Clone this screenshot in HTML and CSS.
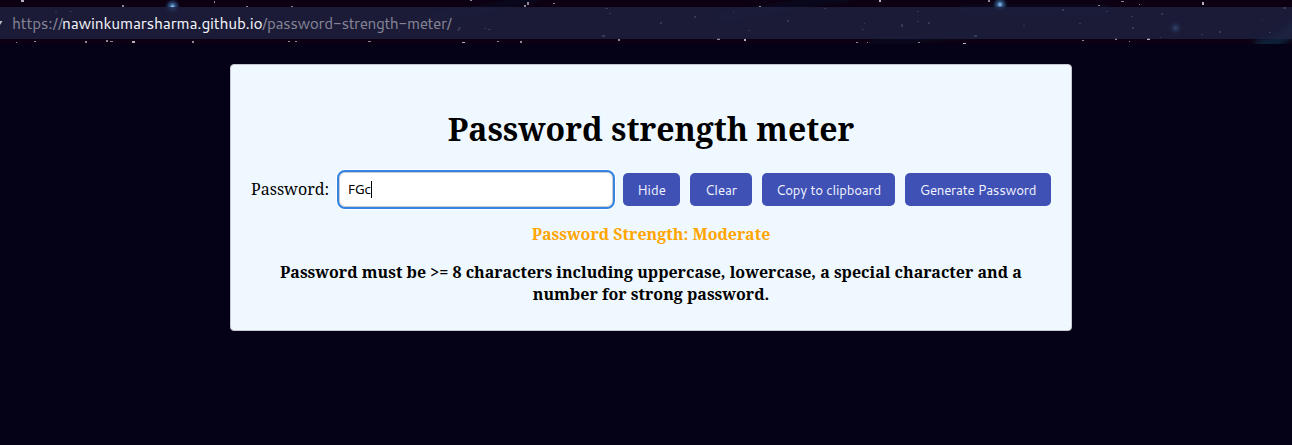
FILE: index.html
```html
<!DOCTYPE html>
<html lang="en">
<head>
<meta charset="utf-8">
<title>Password strength meter</title>
<link rel="stylesheet" href="styles.css">
</head>
<body>
<header class="toolbar">
  <svg class="sky" width="1292" height="44" viewBox="0 0 1292 44" aria-hidden="true">
    <defs>
      <filter id="soft" x="-50%" y="-150%" width="200%" height="400%"><feGaussianBlur stdDeviation="3"/></filter>
      <filter id="star" x="-5%" y="-20%" width="110%" height="140%"><feGaussianBlur stdDeviation=".6"/></filter>
      <radialGradient id="glow"><stop offset="0" stop-color="#a5d2fb"/><stop offset=".3" stop-color="#447db5" stop-opacity=".8"/><stop offset="1" stop-color="#153660" stop-opacity="0"/></radialGradient>
    </defs>
    <g filter="url(#soft)" fill="none" stroke="#0b1b30" stroke-width="4" opacity=".7">
      <path d="M718 18Q780 5 850 -2"/><path d="M420 20Q490 8 540 -3"/><path d="M870 44Q925 37 975 35"/><path d="M960 9H1110"/><path d="M1255 46Q1285 43 1300 20" stroke="#073048" stroke-width="12"/>
    </g>
    <circle cx="172.500" cy="6.500" r="8" fill="url(#glow)"/><circle cx="1000" cy="4.500" r="8" fill="url(#glow)"/><circle cx="1175.500" cy="28" r="7" fill="url(#glow)"/>
    <g fill="#8d8995" filter="url(#star)">
      <path d="M122 5h2v2h-2zM214 1h1v2h-1zM55 12h2v1h-2zM70 11h2v1h-2zM106 40h2v2h-2zM110 41h3v1h-3zM85 41h2v2h-2zM34 41h2v1h-2zM16 42h1v1h-1zM192 41h2v2h-2zM246 6h2v1h-2zM291 6h2v1h-2zM288 41h2v1h-2zM295 41h2v1h-2z"/>
      <path d="M368 41h3v1h-3zM470 0h2v1h-2zM524 5h2v2h-2zM527 2h2v3h-2zM553 3h2v1h-2zM497 41h2v1h-2zM520 41h2v2h-2zM618 39h2v2h-2zM605 8h3v1h-3zM609 13h2v1h-2zM602 35h3v2h-3zM459 27h2l-2 4h-2zM484 28h2v1h-2zM488 29h3v1h-3zM399 31h1v1h-1z"/>
      <path d="M759 6h2v1h-2zM733 11h1v1h-1zM694 16h2v2h-2zM660 22h2v2h-2zM787 20h2v2h-2zM748 30h2v1h-2zM717 38h3v2h-3zM824 8h2v1h-2zM862 29h2v1h-2zM864 23h1v1h-1zM917 11h2v1h-2zM917 21h2v1h-2zM901 24h2v3h-2zM928 22h2v2h-2zM856 42h2v1h-2zM867 42h1v1h-1zM918 42h2v1h-2z"/>
      <path d="M988 0h2v2h-2zM1121 1h3v1h-3zM1139 4h1v1h-1zM1062 9h2v2h-2zM1098 5h2v1h-2zM1106 11h2v1h-2zM1131 16h2v1h-2zM1161 13h2v2h-2zM1132 27h2v2h-2zM1219 31h2v2h-2zM1201 34h2v1h-2zM1115 38h2v2h-2zM1082 40h2v1h-2zM1129 41h1v1h-1zM1160 37h1v1h-1zM1262 19h1v1h-1zM1269 32h2v1h-2zM1079 23h2v1h-2zM1023 25h2v1h-2zM974 35h3v2h-3zM1283 7h3v2h-3z"/>
    </g>
    <path fill="#b5b0bd" filter="url(#star)" d="M21 0h3v2h-3zM132 41h3v2h-3zM462 42h3v1h-3zM744 39h2v2h-2zM879 0h2v2h-2zM963 43h3v1h-3zM1147 38h3v2h-3zM1202 2h2v3h-2z"/>
  </svg>
  <div class="address">
    <svg class="tick" width="3" height="5" aria-hidden="true"><path d="M0 0H2.500L0 4Z" fill="#bdbbc8"/></svg>
    <span class="muted scheme">https://</span><span class="domain">nawinkumarsharma.github.io</span><span class="muted path">/password-strength-meter/</span>
  </div>
</header>
<main class="card">
  <h1 class="title">Password strength meter</h1>
  <div class="controls">
    <label class="label" for="password">Password:</label>
    <div class="field" id="password" role="textbox"><span class="value">FGc</span><span class="caret"></span></div>
    <div class="actions">
      <button class="button hide">Hide</button>
      <button class="button clear">Clear</button>
      <button class="button copy">Copy to clipboard</button>
      <button class="button generate">Generate Password</button>
    </div>
  </div>
  <p class="strength">Password Strength: Moderate</p>
  <p class="hint">Password must be &gt;= 8 characters including uppercase, lowercase, a special character and a<br>number for strong password.</p>
</main>
</body>
</html>
```
FILE: styles.css
```css
* { box-sizing: border-box; }
body { margin: 0; height: 445px; overflow: hidden; background: #050117; color: #000; font-family: "Noto Serif", "Droid Serif", "DejaVu Serif Condensed", "DejaVu Serif", serif; font-size: 16px; }
.toolbar { position: relative; height: 44px; padding-top: 7px; background: #0e0013; }
.sky { position: absolute; inset: 0; }
.address { position: relative; height: 32px; display: flex; align-items: center; background: rgba(31, 35, 65, .78); font: 15.5px/32px Cantarell, "Noto Sans", sans-serif; white-space: nowrap; }
.tick { margin-right: 9px; }
.muted { color: #858395; }
.domain { color: #f4f3fa; }
.scheme { width: 50px; letter-spacing: -.2px; }
.domain { width: 200px; letter-spacing: -.23px; }
.path { width: 191px; letter-spacing: -.46px; }
.card { width: 842px; height: 267px; margin: 20px 0 0 230px; padding: 42px 20px 0; border: 1px solid #c6c7d0; border-radius: 4px; background: #f0f8ff; text-align: center; }
.title { margin: 0; height: 44px; font-size: 32px; line-height: 44px; font-weight: bold; white-space: nowrap; }
.controls { display: flex; align-items: center; height: 40px; margin-top: 18px; }
.label { width: 86px; text-align: left; white-space: nowrap; }
.field { display: flex; align-items: center; width: 278px; height: 39px; padding-left: 9px; background: #fff; border: 2px solid #3584e4; border-radius: 8px; box-shadow: inset 0 0 0 1px #c9cbd2, 0 0 0 1px #fff; font: 13.33px "Noto Sans", sans-serif; }
.caret { width: 1px; height: 17px; background: #000; }
.actions { display: flex; gap: 10px; margin-left: 8px; }
.button { height: 33px; padding: 0; border: 0; border-radius: 5px; background: #3f51b5; color: #f0f2ff; font: 13.33px Cantarell, "Noto Sans", sans-serif; white-space: nowrap; }
.hide { width: 57px; }
.clear { width: 62px; letter-spacing: -.1px; }
.copy { width: 133px; letter-spacing: -.22px; }
.generate { width: 146px; letter-spacing: -.28px; }
.strength { margin: 14px 0 0; line-height: 22px; font-weight: bold; color: #ffa500; }
.hint { margin: 16px 0 0; line-height: 22px; font-weight: bold; white-space: nowrap; }
```
